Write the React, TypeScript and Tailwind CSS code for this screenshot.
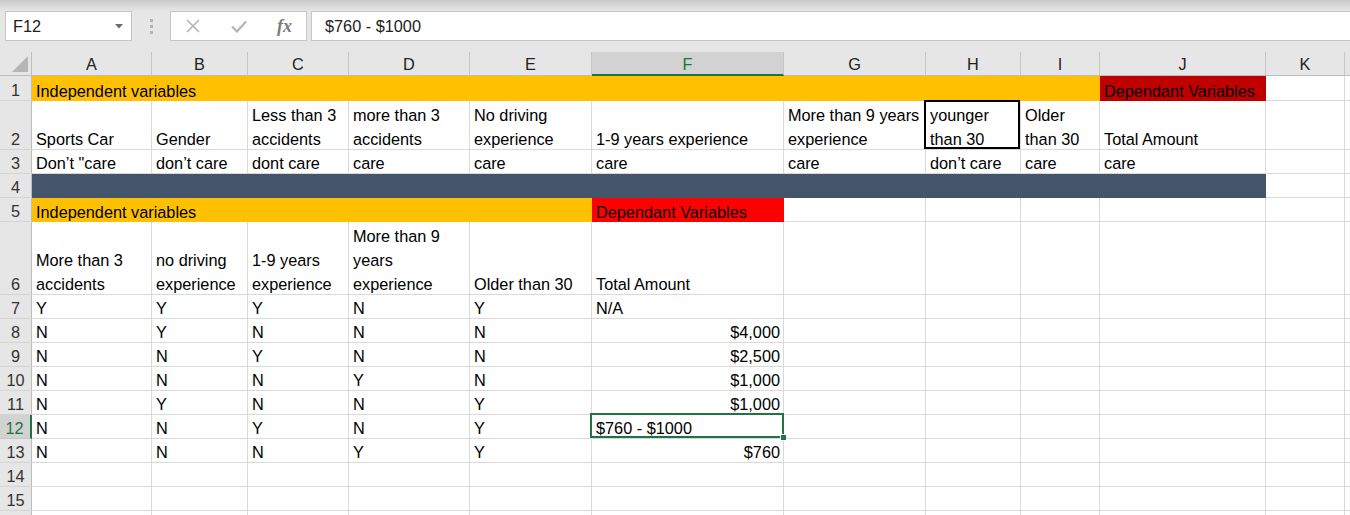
import React from "react";

type Cell = {
  lines?: string[];
  right?: boolean;
  fill?: string;
  span?: number;
  box?: "black" | "sel";
};

const COLS = ["A", "B", "C", "D", "E", "F", "G", "H", "I", "J", "K", ""];

const t = (...lines: string[]): Cell => ({ lines });
const r = (s: string): Cell => ({ lines: [s], right: true });
const blank = (n: number): Cell[] => Array.from({ length: n }, () => ({}));
const yn = (s: string): Cell[] => s.split("").map((ch) => t(ch));

const ROWS: Cell[][] = [
  [
    { lines: ["Independent variables"], fill: "bg-[#ffc000]", span: 9 },
    { lines: ["Dependant Variables"], fill: "bg-[#c00000]" },
    ...blank(2),
  ],
  [
    t("Sports Car"),
    t("Gender"),
    t("Less than 3", "accidents"),
    t("more than 3", "accidents"),
    t("No driving", "experience"),
    t("1-9 years experience"),
    t("More than 9 years", "experience"),
    { lines: ["younger", "than 30"], box: "black" },
    t("Older", "than 30"),
    t("Total Amount"),
    ...blank(2),
  ],
  [
    t("Don’t \"care"),
    t("don’t care"),
    t("dont care"),
    t("care"),
    t("care"),
    t("care"),
    t("care"),
    t("don’t care"),
    t("care"),
    t("care"),
    ...blank(2),
  ],
  [{ fill: "bg-[#44546a]", span: 10 }, ...blank(2)],
  [
    { lines: ["Independent variables"], fill: "bg-[#ffc000]", span: 5 },
    { lines: ["Dependant Variables"], fill: "bg-[#ff0000]" },
    ...blank(6),
  ],
  [
    t("More than 3", "accidents"),
    t("no driving", "experience"),
    t("1-9 years", "experience"),
    t("More than 9", "years", "experience"),
    t("Older than 30"),
    t("Total Amount"),
    ...blank(6),
  ],
  [...yn("YYYNY"), t("N/A"), ...blank(6)],
  [...yn("NYNNN"), r("$4,000"), ...blank(6)],
  [...yn("NNYNN"), r("$2,500"), ...blank(6)],
  [...yn("NNNYN"), r("$1,000"), ...blank(6)],
  [...yn("NYNNY"), r("$1,000"), ...blank(6)],
  [...yn("NNYNY"), { lines: ["$760 - $1000"], box: "sel" }, ...blank(6)],
  [...yn("NNNYY"), r("$760"), ...blank(6)],
  blank(12),
  blank(12),
  blank(12),
];

function GridCell({ cell }: { cell: Cell }) {
  const span =
    cell.span === 9
      ? "col-span-9"
      : cell.span === 10
        ? "col-span-10"
        : cell.span === 5
          ? "col-span-5"
          : "";
  const edge = cell.fill
    ? cell.fill
    : "bg-white border-r border-b border-[#d9d9d9]";
  return (
    <div
      className={`relative flex flex-col justify-end whitespace-nowrap px-[4px] leading-[24px] text-black ${span} ${edge} ${
        cell.right ? "items-end pr-[3px]" : "items-start"
      } ${cell.box ? "z-10" : ""}`}
    >
      {cell.lines && (
        <div className={`translate-y-[2px] ${cell.right ? "text-right" : ""}`}>
          {cell.lines.map((l, i) => (
            <div key={i}>{l}</div>
          ))}
        </div>
      )}
      {cell.box === "black" && (
        <div className="pointer-events-none absolute -left-[2px] -top-[1px] right-0 bottom-0 border-2 border-black" />
      )}
      {cell.box === "sel" && (
        <div className="pointer-events-none absolute -left-[2px] -top-[2px] right-[-1px] bottom-0 border-2 border-[#217346]">
          <div className="absolute -right-[5px] -bottom-[5px] h-[7px] w-[7px] border border-white bg-[#217346]" />
        </div>
      )}
    </div>
  );
}

export default function App() {
  return (
    <div className="h-[515px] w-[1350px] overflow-hidden bg-[#e6e6e6] font-['Liberation_Sans',Arial,sans-serif] text-[16.3px]">
      {/* ribbon edge */}
      <div className="h-[11px] bg-linear-to-b from-[#cbcbcb] to-[#e6e6e6]" />

      {/* formula bar */}
      <div className="flex h-[30px] items-stretch">
        <div className="ml-[5px] flex w-[127px] items-center justify-between border border-[#c6c6c6] bg-white pl-[7px] pr-[8px] text-[#222]">
          <span>F12</span>
          <svg width="8" height="5" viewBox="0 0 8 5">
            <path d="M0 0h8L4 4.5z" fill="#6b6b6b" />
          </svg>
        </div>
        <div className="flex w-[38px] flex-col items-center justify-center gap-[3px]">
          <div className="h-[3px] w-[3px] bg-[#b3b3b3]" />
          <div className="h-[3px] w-[3px] bg-[#b3b3b3]" />
          <div className="h-[3px] w-[3px] bg-[#b3b3b3]" />
        </div>
        <div className="flex w-[137px] items-center border border-[#c6c6c6] bg-white">
          <svg className="ml-[15px]" width="14" height="14" viewBox="0 0 14 14">
            <path d="M1 1l12 12M13 1L1 13" stroke="#b4b4b4" strokeWidth="1.6" />
          </svg>
          <svg className="ml-[31px]" width="16" height="13" viewBox="0 0 16 13">
            <path d="M1 6.5l5 5L15 1.5" stroke="#b4b4b4" strokeWidth="2.2" fill="none" />
          </svg>
          <span className="ml-[30px] font-['Liberation_Serif',serif] text-[18px] italic font-bold text-[#7a7a7a]">
            fx
          </span>
        </div>
        <div className="ml-[4px] flex flex-1 items-center border border-r-0 border-[#c6c6c6] bg-white pl-[13px] text-[#222]">
          $760 - $1000
        </div>
      </div>

      <div className="h-[11px]" />

      {/* sheet */}
      <div className="grid grid-cols-[32px_120px_96px_101px_121px_122px_192px_142px_95px_79px_166px_79px_1fr] grid-rows-[24px_25px_49px_24px_24px_24px_73px_24px_24px_24px_24px_24px_24px_24px_24px_24px_24px]">
        <div className="relative border-r border-b border-[#bdbdbd] bg-[#e6e6e6]">
          <svg className="absolute right-[3px] bottom-[3px]" width="16" height="16" viewBox="0 0 16 16">
            <path d="M16 0V16H0z" fill="#b5b5b5" />
          </svg>
        </div>
        {COLS.map((c, i) =>
          c === "F" ? (
            <div
              key={i}
              className="flex items-center justify-center border-r border-b-2 border-r-[#c6c6c6] border-b-[#217346] bg-[#d2d2d2] pt-[3px] text-[#217346]"
            >
              {c}
            </div>
          ) : (
            <div
              key={i}
              className="flex items-center justify-center border-r border-b border-r-[#c6c6c6] border-b-[#bdbdbd] bg-[#e6e6e6] pt-[2px] text-[#222]"
            >
              {c}
            </div>
          )
        )}

        {ROWS.map((row, ri) => (
          <React.Fragment key={ri}>
            {ri === 11 ? (
              <div className="flex flex-col items-center justify-end border-r-2 border-b border-r-[#217346] border-b-[#c6c6c6] bg-[#d2d2d2] pr-[1px] leading-[24px] text-[#217346]">
                <div className="translate-y-[2px]">{ri + 1}</div>
              </div>
            ) : (
              <div className="flex flex-col items-center justify-end border-r border-b border-r-[#bdbdbd] border-b-[#d4d4d4] bg-[#e6e6e6] leading-[24px] text-[#333]">
                {ri < 15 && <div className="translate-y-[2px]">{ri + 1}</div>}
              </div>
            )}
            {row.map((cell, ci) => (
              <GridCell key={ci} cell={cell} />
            ))}
          </React.Fragment>
        ))}
      </div>
    </div>
  );
}
